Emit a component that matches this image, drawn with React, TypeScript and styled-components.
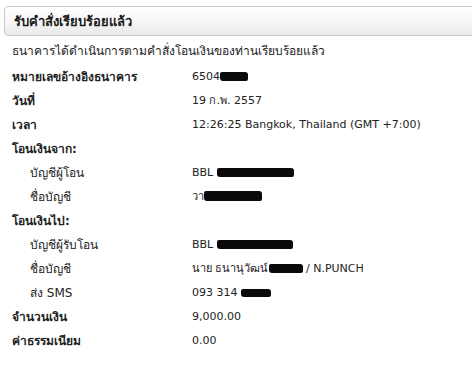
import React from "react";
import styled, { createGlobalStyle } from "styled-components";

const GlobalStyle = createGlobalStyle`
  html, body {
    margin: 0;
    padding: 0;
    background: #ffffff;
    overflow: hidden;
  }
  body {
    font-family: Tahoma, "DejaVu Sans", "Noto Sans", sans-serif;
    font-size: 11px;
    color: #222222;
  }
`;

type Row = {
  label: string;
  value?: React.ReactNode;
  indent?: boolean;
  heading?: boolean;
};

const Redact = ({ w, h = 9 }: { w: number; h?: number }) => <Blob w={w} h={h} />;

const rows: Row[] = [
  { label: "หมายเลขอ้างอิงธนาคาร", value: <>6504<Redact w={28} /></> },
  { label: "วันที่", value: "19 ก.พ. 2557" },
  { label: "เวลา", value: "12:26:25 Bangkok, Thailand (GMT +7:00)" },
  { label: "โอนเงินจาก:", heading: true },
  { label: "บัญชีผู้โอน", indent: true, value: <>BBL <Redact w={77} /></> },
  { label: "ชื่อบัญชี", indent: true, value: <>วา<Redact w={58} h={10} /></> },
  { label: "โอนเงินไป:", heading: true },
  { label: "บัญชีผู้รับโอน", indent: true, value: <>BBL <Redact w={76} /></> },
  {
    label: "ชื่อบัญชี",
    indent: true,
    value: <>นาย ธนานุวัฒน์<Redact w={34} /> / N.PUNCH</>,
  },
  { label: "ส่ง SMS", indent: true, value: <>093 314 <Redact w={30} h={8} /></> },
  { label: "จำนวนเงิน", value: "9,000.00" },
  { label: "ค่าธรรมเนียม", value: "0.00" },
];

export default function App() {
  return (
    <>
      <GlobalStyle />
      <Page>
        <Header>รับคำสั่งเรียบร้อยแล้ว</Header>
        <Notice>ธนาคารได้ดำเนินการตามคำสั่งโอนเงินของท่านเรียบร้อยแล้ว</Notice>
        <Table>
          {rows.map((r, i) => (
            <Line key={i}>
              <Label indent={!!r.indent} bold={!r.indent}>
                {r.label}
              </Label>
              <Value>{r.value}</Value>
            </Line>
          ))}
        </Table>
      </Page>
    </>
  );
}

const Page = styled.div`
  padding: 6px 0 0 4px;
  display: flex;
  flex-direction: column;
`;

const Header = styled.div`
  height: 28px;
  margin-right: -12px;
  padding-left: 9px;
  display: flex;
  align-items: center;
  border: 1px solid #c8c8c8;
  border-radius: 4px;
  background: linear-gradient(#ffffff 0%, #f7f7f7 50%, #e9e9e9 100%);
  font-size: 13px;
  font-weight: bold;
  color: #1a1a1a;
`;

const Notice = styled.div`
  height: 24px;
  margin-top: 2px;
  padding-left: 8px;
  display: flex;
  align-items: center;
  font-size: 12px;
`;

const Table = styled.div`
  display: flex;
  flex-direction: column;
  padding-top: 2px;
`;

const Line = styled.div`
  height: 24px;
  display: grid;
  grid-template-columns: 188px 1fr;
  align-items: center;
`;

const Label = styled.div<{ indent: boolean; bold: boolean }>`
  padding-left: ${(p) => (p.indent ? 26 : 8)}px;
  font-size: 12px;
  font-weight: ${(p) => (p.bold ? "bold" : "normal")};
  white-space: nowrap;
`;

const Value = styled.div`
  font-size: 11px;
  white-space: pre;
`;

const Blob = styled.span<{ w: number; h: number }>`
  display: inline-block;
  vertical-align: -1px;
  width: ${(p) => p.w}px;
  height: ${(p) => p.h}px;
  background: #0a0a0a;
  border-radius: 2px 3px 2px 3px;
`;
